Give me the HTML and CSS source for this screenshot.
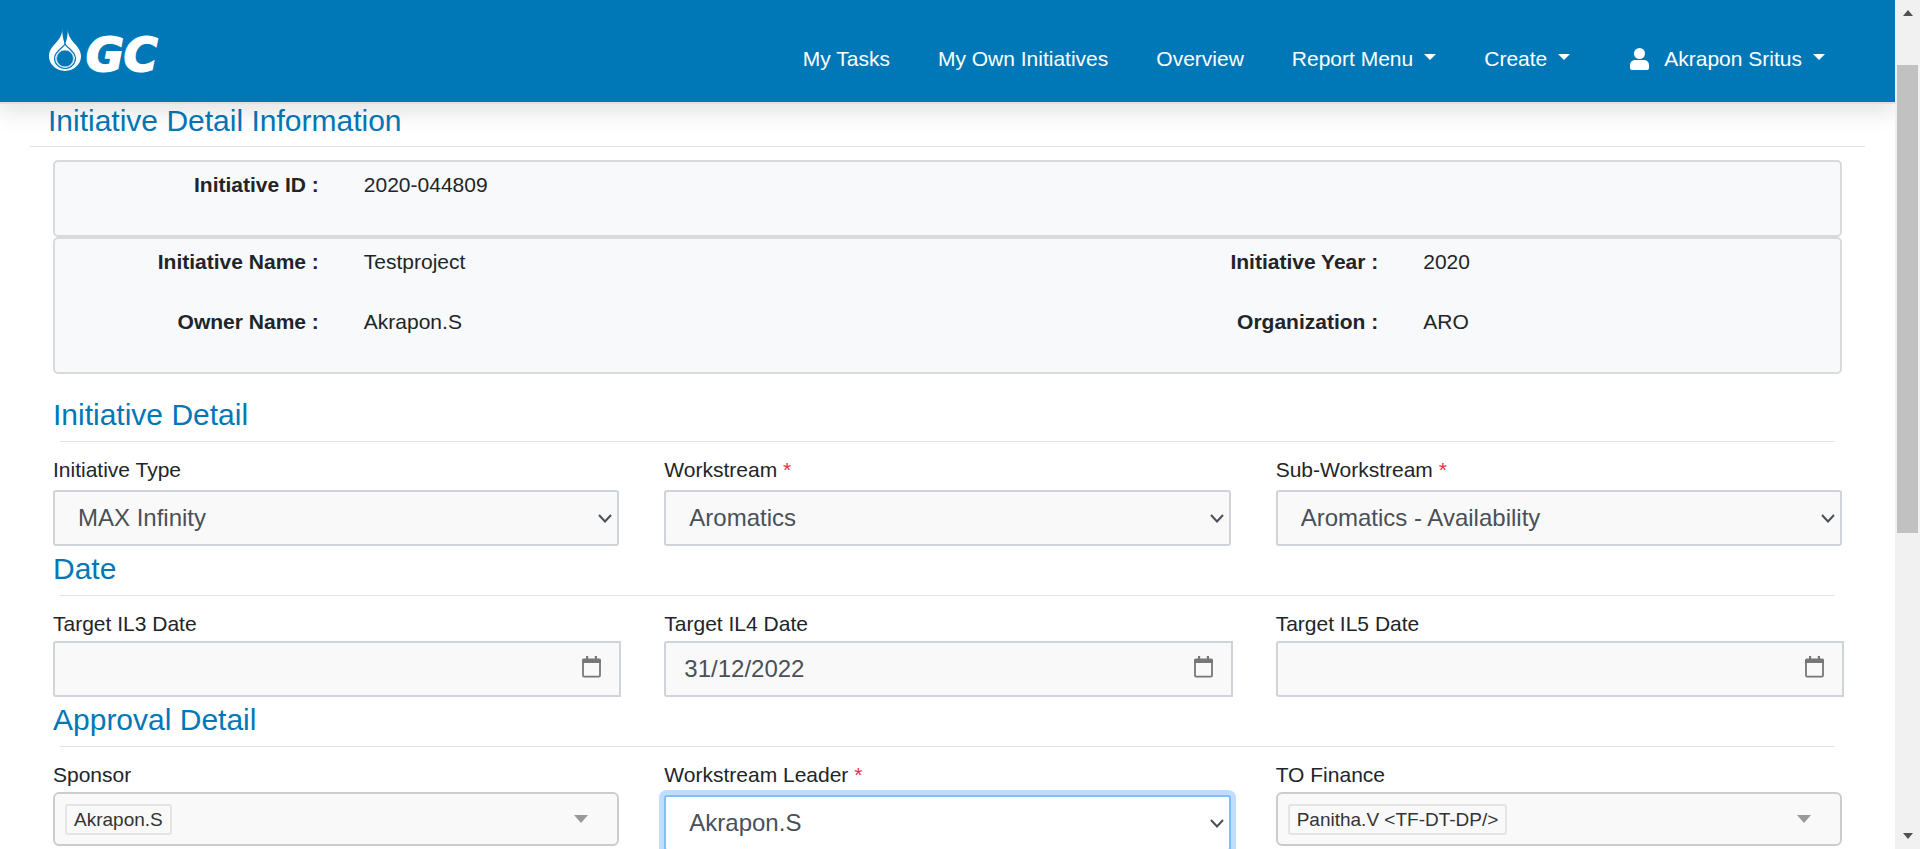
FILE: index.html
```html
<!DOCTYPE html>
<html lang="en">
<head>
<meta charset="utf-8">
<title>Initiative Detail Information</title>
<link rel="stylesheet" href="styles.css">
</head>
<body>
<svg class="sprite" aria-hidden="true">
  <symbol id="chevron" viewBox="0 0 14 9"><path d="M1 1l6 6.500 6-6.500" fill="none" stroke="#495057" stroke-width="2"/></symbol>
  <symbol id="calendar" viewBox="0 0 19 22"><path d="M1 5v14.500a1.200 1.200 0 0 0 1.200 1.200h14.600a1.200 1.200 0 0 0 1.200-1.200V5" fill="none" stroke="#777" stroke-width="1.800"/><path d="M0 7V4a1.500 1.500 0 0 1 1.500-1.500H4V0h2.200v2.500h6.600V0H15v2.500h2.500A1.500 1.500 0 0 1 19 4v3z" fill="#777"/></symbol>
  <symbol id="triangle" viewBox="0 0 14 8"><path d="M0 0h14L7 8z" fill="#999"/></symbol>
</svg>
<div class="shell">
  <div class="page">
    <header class="topbar">
      <a class="brand" href="#">
        <svg class="drop" viewBox="0 0 32 42" aria-hidden="true">
          <path fill="#fff" d="M13 0C14 12 0 16 0 27A16 15 0 0 0 32 27C32 16 18 12 19 0C18.500 5 18.500 10 16 15C13.500 10 13.500 5 13 0z"/>
          <path fill="none" stroke="#0078b8" stroke-width="1.200" d="M16 11V15C14 19 6 22 5.500 29A10.500 10.500 0 0 0 26.500 29C26 22 18 19 16 15"/>
          <circle cx="16" cy="29.500" r="8.500" fill="#0078b8"/>
          <circle cx="16" cy="29.500" r="8.500" fill="none" stroke="#b5d9ec" stroke-width="1"/>
        </svg>
        <span class="brand-name">GC</span>
      </a>
      <nav class="nav">
        <a href="#">My Tasks</a>
        <a href="#">My Own Initiatives</a>
        <a href="#">Overview</a>
        <button type="button">Report Menu<span class="caret"></span></button>
        <button type="button">Create<span class="caret"></span></button>
        <button type="button" class="user">
          <svg class="person" viewBox="0 0 19 22" aria-hidden="true"><circle cx="9.500" cy="5.500" r="5.500" fill="#fff"/><path fill="#fff" d="M5 12h9a5 5 0 0 1 5 5v3a2 2 0 0 1-2 2H2a2 2 0 0 1-2-2v-3a5 5 0 0 1 5-5z"/></svg>
          Akrapon Sritus<span class="caret"></span>
        </button>
      </nav>
    </header>

    <main>
      <h1 class="title page-title">Initiative Detail Information</h1>
      <hr class="page-rule">

      <div class="content">
        <dl class="card">
          <dt>Initiative ID :</dt><dd>2020-044809</dd>
        </dl>
        <dl class="card">
          <dt>Initiative Name :</dt><dd>Testproject</dd>
          <dt>Initiative Year :</dt><dd>2020</dd>
          <dt>Owner Name :</dt><dd>Akrapon.S</dd>
          <dt>Organization :</dt><dd>ARO</dd>
        </dl>

        <form>
          <section class="group first">
            <h2 class="title">Initiative Detail</h2>
            <hr>
            <div class="fields">
              <div class="field">
                <label for="type">Initiative Type</label>
                <div class="select"><select id="type"><option>MAX Infinity</option></select><svg><use href="#chevron"/></svg></div>
              </div>
              <div class="field">
                <label for="workstream">Workstream <span class="required">*</span></label>
                <div class="select"><select id="workstream"><option>Aromatics</option></select><svg><use href="#chevron"/></svg></div>
              </div>
              <div class="field">
                <label for="sub">Sub-Workstream <span class="required">*</span></label>
                <div class="select"><select id="sub"><option>Aromatics - Availability</option></select><svg><use href="#chevron"/></svg></div>
              </div>
            </div>
          </section>

          <section class="group">
            <h2 class="title">Date</h2>
            <hr>
            <div class="fields">
              <div class="field">
                <label for="il3">Target IL3 Date</label>
                <div class="date"><input id="il3" type="text"><svg><use href="#calendar"/></svg></div>
              </div>
              <div class="field">
                <label for="il4">Target IL4 Date</label>
                <div class="date"><input id="il4" type="text" value="31/12/2022"><svg><use href="#calendar"/></svg></div>
              </div>
              <div class="field">
                <label for="il5">Target IL5 Date</label>
                <div class="date"><input id="il5" type="text"><svg><use href="#calendar"/></svg></div>
              </div>
            </div>
          </section>

          <section class="group">
            <h2 class="title">Approval Detail</h2>
            <hr>
            <div class="fields">
              <div class="field">
                <label for="sponsor">Sponsor</label>
                <button type="button" class="picker" id="sponsor"><span class="tag">Akrapon.S</span><svg><use href="#triangle"/></svg></button>
              </div>
              <div class="field">
                <label for="leader">Workstream Leader <span class="required">*</span></label>
                <div class="select active"><select id="leader"><option>Akrapon.S</option></select><svg><use href="#chevron"/></svg></div>
              </div>
              <div class="field">
                <label for="finance">TO Finance</label>
                <button type="button" class="picker" id="finance"><span class="tag">Panitha.V &lt;TF-DT-DP/&gt;</span><svg><use href="#triangle"/></svg></button>
              </div>
            </div>
          </section>
        </form>
      </div>
    </main>
  </div>
  <div class="scrollbar" aria-hidden="true">
    <span class="arrow up"></span>
    <span class="track"><span class="thumb"></span></span>
    <span class="arrow down"></span>
  </div>
</div>
</body>
</html>
```
FILE: styles.css
```css
* { box-sizing: border-box; }

body {
  margin: 0;
  background: #fff;
  color: #212529;
  font: 21px/30px "Liberation Sans", Arial, sans-serif;
}

button, input, select { font: inherit; margin: 0; }

.sprite { display: none; }

.shell { display: flex; height: 100vh; overflow: hidden; }
.page { flex: 1; min-width: 0; overflow: hidden; }

/* Header */
.topbar {
  position: relative;
  z-index: 1;
  display: flex;
  align-items: center;
  justify-content: space-between;
  height: 104px;
  padding: 10px 70px 0 49px;
  background: #0078b8;
  background-clip: padding-box;
  border-bottom: 2px solid #dee2e6;
  box-shadow: 0 10px 20px rgba(0, 0, 0, .1);
}
.brand { display: flex; align-items: flex-end; gap: 5px; color: #fff; text-decoration: none; padding-bottom: 12px; }
.drop { width: 32px; height: 42px; }
.brand-name {
  font: italic bold 46px/32px "DejaVu Sans", sans-serif;
  -webkit-text-stroke: 2px #fff;
}
.nav { display: flex; align-items: center; gap: 48px; padding-top: 6px; }
.nav a, .nav button {
  display: flex;
  align-items: center;
  padding: 0;
  border: 0;
  background: none;
  color: #fff;
  line-height: 30px;
  text-decoration: none;
  white-space: nowrap;
}
.nav .user { margin-left: 12px; }
.person { width: 19px; height: 22px; margin-right: 15px; }
.caret { margin: 0 0 4px 11px; border: 6px solid transparent; border-top-color: #fff; border-bottom: 0; }

/* Headings */
.title { margin: 0; color: #0078b8; font-size: 30px; line-height: 34px; font-weight: 400; }
.page-title { padding-left: 48px; }
hr { height: 1px; margin: 9px 7px 13px; border: 0; background: #e2e3e5; }
.page-rule { margin: 8px 30px 13px; }
.content { padding: 0 53px; }

/* Summary cards */
.card {
  display: grid;
  grid-template-columns: 264fr 766fr 204fr 417fr;
  gap: 30px 45px;
  margin: 0;
  padding: 8px 0 35px;
  background: #f8f9fa;
  border: 2px solid #d8dadc;
  border-radius: 5px;
}
dt { font-weight: 700; text-align: right; }
dd { margin: 0; }

/* Form */
.group { padding-top: 6px; }
.group.first { padding-top: 24px; }
.fields { display: grid; grid-template-columns: repeat(3, 1fr); column-gap: 45px; align-items: start; }
.field { display: flex; flex-direction: column; gap: 2px; }
.required { color: #dc3545; }

.select, .date { position: relative; }
.select { margin-top: 3px; }
.date { margin-right: -2px; }
.select select, .date input {
  display: block;
  width: 100%;
  height: 56px;
  appearance: none;
  background: #f9f9f9;
  border: 2px solid #ced4da;
  border-radius: 3px;
  color: #495057;
  font-size: 24px;
}
.select select { padding: 0 30px 1px 23px; }
.date input { padding: 0 48px 0 18px; border-radius: 3px 0 0 3px; }
.select svg, .date svg { position: absolute; pointer-events: none; }
.select svg { right: 7px; top: 24px; width: 14px; height: 9px; }
.date svg { right: 20px; top: 15px; width: 19px; height: 22px; }
.active select { background: #fff; border-color: #80bdff; box-shadow: 0 0 0 5px #bfdeff; outline: 0; }

.picker {
  display: flex;
  align-items: center;
  justify-content: space-between;
  width: 100%;
  height: 54px;
  padding: 0 29px 0 10px;
  background: #f9f9f9;
  border: 2px solid #ccc;
  border-radius: 6px;
}
.picker svg { width: 14px; height: 8px; }
.tag {
  padding: 0 7px;
  border: 2px solid #e4e4e4;
  border-radius: 3px;
  color: #333;
  font-size: 19px;
  line-height: 27px;
}

/* Scrollbar */
.scrollbar { display: flex; flex-direction: column; width: 25px; padding: 10px 2px; background: #f1f1f1; }
.track { flex: 1; padding-top: 49px; }
.thumb { display: block; width: 21px; height: 61%; background: #c1c1c1; }
.arrow { align-self: center; border: 5px solid transparent; }
.up { border-top: 0; border-bottom: 6px solid #505050; }
.down { border-bottom: 0; border-top: 6px solid #505050; }
```
